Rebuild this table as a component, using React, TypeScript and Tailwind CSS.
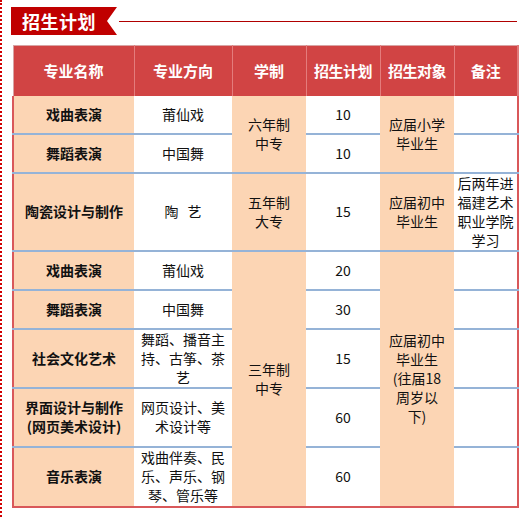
const font = { fontFamily: '"Noto Sans CJK SC", "Noto Sans", sans-serif' }

const line = "border-b-2 border-[#95b3d7]"
const peach = "bg-[#fcd5b4]"

function Lines({ items }: { items: string[] }) {
  return (
    <>
      {items.map((t, i) => (
        <div key={i}>{t}</div>
      ))}
    </>
  )
}

export default function App() {
  return (
    <div
      style={font}
      className="h-[517px] w-[529px] overflow-hidden border-l-2 border-dotted border-[#d10000] bg-white pl-[9px] pt-[7px]"
    >
      <div className="flex h-[28px] items-center">
        <div className="flex h-full w-[106px] items-center bg-[#c00000] pl-[11px] text-[18px] font-bold leading-none tracking-[0.5px] text-white [clip-path:polygon(0_0,100%_0,calc(100%-10px)_50%,100%_100%,0_100%)]">
          招生计划
        </div>
        <div className="ml-[2px] mr-[12px] h-px flex-1 bg-[#b00000]" />
      </div>

      <table className="ml-[1px] mt-[10px] w-[505px] table-fixed border-collapse text-center text-[14px] leading-[19px] text-[#111]">
        <colgroup>
          <col className="w-[121px]" />
          <col className="w-[98px]" />
          <col className="w-[74px]" />
          <col className="w-[74px]" />
          <col className="w-[74px]" />
          <col className="w-[64px]" />
        </colgroup>
        <thead>
          <tr className="h-[50px] bg-[#d14444] text-[15px] font-bold text-white">
            <th className="border-t border-l border-[#d8a4a4] border-r border-r-[#e47c7c]">专业名称</th>
            <th className="border-t border-[#d8a4a4] border-r border-r-[#e47c7c]">专业方向</th>
            <th className="border-t border-[#d8a4a4] border-r border-r-[#e47c7c]">学制</th>
            <th className="border-t border-[#d8a4a4] border-r border-r-[#e47c7c] px-0 tracking-[-0.5px]">招生计划</th>
            <th className="border-t border-[#d8a4a4] border-r border-r-[#e47c7c] px-0 tracking-[-0.5px]">招生对象</th>
            <th className="border-t border-r-2 border-[#d8a4a4] border-r-[#e07a7a]">备注</th>
          </tr>
        </thead>
        <tbody className="border-b-2 border-l-2 border-r-2 border-[#d9585a]">
          <tr className="h-[38px]">
            <td className={`${peach} ${line} font-bold`}>戏曲表演</td>
            <td className={line}>莆仙戏</td>
            <td rowSpan={2} className={`${peach} ${line}`}>
              <Lines items={["六年制", "中专"]} />
            </td>
            <td className={line}>10</td>
            <td rowSpan={2} className={`${peach} ${line}`}>
              <Lines items={["应届小学", "毕业生"]} />
            </td>
            <td className={line}></td>
          </tr>
          <tr className="h-[39px]">
            <td className={`${peach} ${line} font-bold`}>舞蹈表演</td>
            <td className={line}>中国舞</td>
            <td className={line}>10</td>
            <td className={line}></td>
          </tr>
          <tr className="h-[78px]">
            <td className={`${peach} ${line} font-bold`}>陶瓷设计与制作</td>
            <td className={line}>
              陶<span className="ml-[9px]">艺</span>
            </td>
            <td className={`${peach} ${line}`}>
              <Lines items={["五年制", "大专"]} />
            </td>
            <td className={line}>15</td>
            <td className={`${peach} ${line}`}>
              <Lines items={["应届初中", "毕业生"]} />
            </td>
            <td className={line}>
              <Lines items={["后两年进", "福建艺术", "职业学院", "学习"]} />
            </td>
          </tr>
          <tr className="h-[39px]">
            <td className={`${peach} ${line} font-bold`}>戏曲表演</td>
            <td className={line}>莆仙戏</td>
            <td rowSpan={5} className={peach}>
              <Lines items={["三年制", "中专"]} />
            </td>
            <td className={line}>20</td>
            <td rowSpan={5} className={peach}>
              <Lines items={["应届初中", "毕业生", "(往届18", "周岁以", "下)"]} />
            </td>
            <td className={line}></td>
          </tr>
          <tr className="h-[39px]">
            <td className={`${peach} ${line} font-bold`}>舞蹈表演</td>
            <td className={line}>中国舞</td>
            <td className={line}>30</td>
            <td className={line}></td>
          </tr>
          <tr className="h-[59px]">
            <td className={`${peach} ${line} font-bold`}>社会文化艺术</td>
            <td className={line}>
              <Lines items={["舞蹈、播音主", "持、古筝、茶", "艺"]} />
            </td>
            <td className={line}>15</td>
            <td className={line}></td>
          </tr>
          <tr className="h-[59px]">
            <td className={`${peach} ${line} font-bold`}>
              <Lines items={["界面设计与制作", "(网页美术设计)"]} />
            </td>
            <td className={line}>
              <Lines items={["网页设计、美", "术设计等"]} />
            </td>
            <td className={line}>60</td>
            <td className={line}></td>
          </tr>
          <tr className="h-[60px]">
            <td className={`${peach} font-bold`}>音乐表演</td>
            <td>
              <Lines items={["戏曲伴奏、民", "乐、声乐、钢", "琴、管乐等"]} />
            </td>
            <td>60</td>
            <td></td>
          </tr>
        </tbody>
      </table>
    </div>
  )
}
